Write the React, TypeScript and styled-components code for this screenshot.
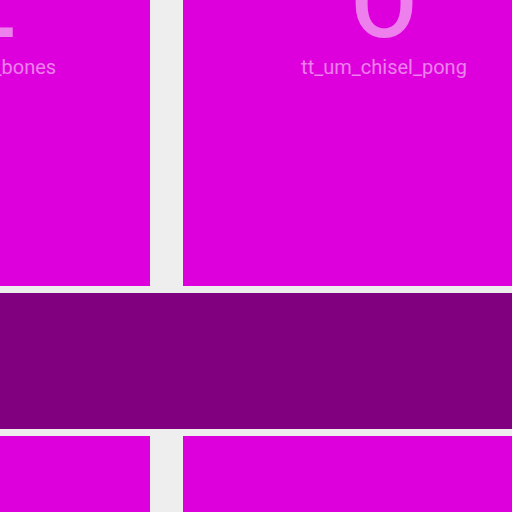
import React from "react";
import styled, { createGlobalStyle } from "styled-components";

const Global = createGlobalStyle`
  html, body {
    margin: 0;
    padding: 0;
    background: #eeeeee;
    font-family: Roboto, "Noto Sans", sans-serif;
  }
`;

const Viewport = styled.div`
  width: 512px;
  height: 512px;
  overflow: hidden;
  background: #eeeeee;
`;

const Canvas = styled.div`
  display: flex;
  flex-direction: column;
  width: 757px;
  margin: -60px 0 0 -172px;
`;

const TileRow = styled.div`
  display: flex;
  gap: 33px;
`;

const Tile = styled.div<{ $w: number }>`
  flex: 0 0 ${(p) => p.$w}px;
  height: 346px;
  box-sizing: border-box;
  padding-top: 18px;
  background: #dd00dd;
  display: flex;
  flex-direction: column;
  align-items: center;
  color: rgba(255, 255, 255, 0.5);
`;

const Glyph = styled.div`
  font-size: 96px;
  font-weight: 500;
  line-height: 92px;
  height: 92px;
`;

const Name = styled.div`
  margin-top: 5px;
  font-size: 20px;
  line-height: 24px;
  white-space: nowrap;
`;

const Band = styled.div`
  height: 136px;
  margin: 7px 0;
  background: #800080;
`;

type Project = { glyph: string; name: string; width: number };

const top: Project[] = [
  { glyph: "L", name: "tt_um_a_bones", width: 322 },
  { glyph: "O", name: "tt_um_chisel_pong", width: 402 },
];

const bottom: Project[] = [
  { glyph: "", name: "", width: 322 },
  { glyph: "", name: "", width: 402 },
];

const Row = ({ items }: { items: Project[] }) => (
  <TileRow>
    {items.map((p, i) => (
      <Tile key={i} $w={p.width}>
        <Glyph>{p.glyph}</Glyph>
        <Name>{p.name}</Name>
      </Tile>
    ))}
  </TileRow>
);

export default function App() {
  return (
    <>
      <Global />
      <Viewport>
        <Canvas>
          <Row items={top} />
          <Band />
          <Row items={bottom} />
        </Canvas>
      </Viewport>
    </>
  );
}
